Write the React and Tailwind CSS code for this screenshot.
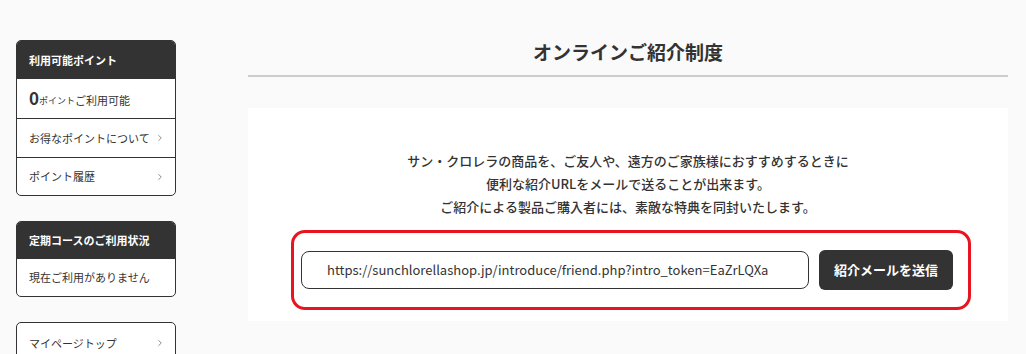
import { ChevronRight } from "lucide-react";

const font = { fontFamily: '"Noto Sans CJK JP", "Noto Sans", sans-serif' };

function SideRow({ children, last, h = "h-[39px]" }) {
  return (
    <div className={`flex items-center justify-between ${h} pl-[12px] pr-[10px] text-[11px] text-[#333] whitespace-nowrap ${last ? "" : "border-b border-[#333]"}`}>
      <span>{children}</span>
      <ChevronRight size={10} strokeWidth={2} className="text-[#777] shrink-0" />
    </div>
  );
}

export default function App() {
  return (
    <div style={font} className="w-[1026px] h-[354px] overflow-hidden bg-[#fafafa] flex pt-[40px] pl-[16px]">
      {/* サイド */}
      <aside className="w-[160px] shrink-0 flex flex-col gap-[25px]">
        <div className="shrink-0 border border-[#333] rounded-[5px] bg-white overflow-hidden">
          <div className="bg-[#333] text-white font-bold text-[11px] h-[38px] flex items-center px-[12px]">
            利用可能ポイント
          </div>
          <div className="h-[40px] flex items-end pb-[12px] px-[12px] border-b border-[#333] text-[#333]">
            <span className="text-[17px] font-bold leading-none">0</span>
            <span className="text-[9px] leading-none mb-[1px]">ポイント</span>
            <span className="text-[11px] leading-none">ご利用可能</span>
          </div>
          <SideRow>お得なポイントについて</SideRow>
          <SideRow last h="h-[37px]">ポイント履歴</SideRow>
        </div>

        <div className="shrink-0 border border-[#333] rounded-[5px] bg-white overflow-hidden">
          <div className="bg-[#333] text-white font-bold text-[11px] h-[37px] flex items-center px-[12px]">
            定期コースのご利用状況
          </div>
          <div className="h-[37px] flex items-center px-[12px] text-[11px] text-[#333]">
            現在ご利用がありません
          </div>
        </div>

        <div className="shrink-0 border border-[#333] rounded-[5px] bg-white overflow-hidden">
          <SideRow last h="h-[40px]">マイページトップ</SideRow>
        </div>
      </aside>

      {/* メイン */}
      <main className="ml-[72px] w-[760px] shrink-0">
        <h1 className="text-center text-[19px] font-bold text-[#333] h-[35px] pb-[10px] flex items-center justify-center">
          オンラインご紹介制度
        </h1>
        <div className="border-b-2 border-[#ccc]" />

        <section className="mt-[31px] bg-white h-[213px] pt-[41px] flex flex-col items-center">
          <p className="text-center text-[13px] font-medium text-[#333] leading-[23px]">
            サン・クロレラの商品を、ご友人や、遠方のご家族様におすすめするときに
            <br />
            便利な紹介URLをメールで送ることが出来ます。
            <br />
            ご紹介による製品ご購入者には、素敵な特典を同封いたします。
          </p>

          <div className="mt-[12px] ml-[6px] w-[680px] h-[80px] border-[3px] border-[#e8141f] rounded-[14px] flex items-center pl-[7px] gap-[10px]">
            <div className="w-[508px] h-[38px] border border-[#333] rounded-[8px] flex items-center pl-[25px] text-[13px] text-[#333] bg-white">
              https://sunchlorellashop.jp/introduce/friend.php?intro_token=EaZrLQXa
            </div>
            <button className="w-[134px] h-[40px] bg-[#333] text-white font-bold text-[13px] rounded-[6px]">
              紹介メールを送信
            </button>
          </div>
        </section>
      </main>
    </div>
  );
}
